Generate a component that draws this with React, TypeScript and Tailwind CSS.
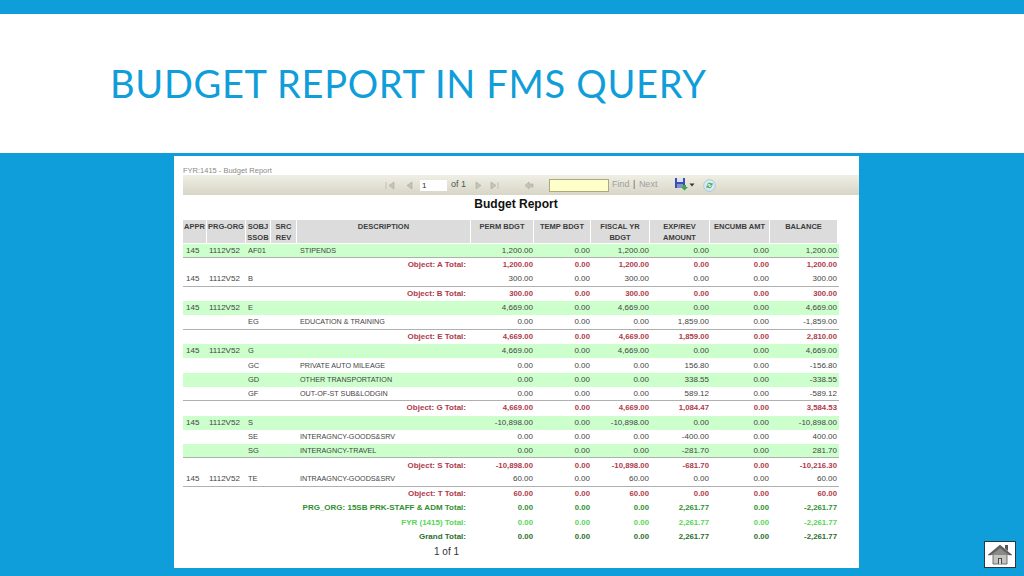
import React from "react";

const cols = "grid grid-cols-[24px_39px_25px_26px_174px_63px_57px_59px_60px_60px_68px]";
const num = "text-right pr-[1px]";

type R = { a?: string; p?: string; s?: string; d?: string; v: string[]; g?: boolean; line?: boolean };

const rows: R[] = [
  { a: "145", p: "1112V52", s: "AF01", d: "STIPENDS", v: ["1,200.00", "0.00", "1,200.00", "0.00", "0.00", "1,200.00"], g: true, line: true },
  { a: "T", d: "Object: A Total:", v: ["1,200.00", "0.00", "1,200.00", "0.00", "0.00", "1,200.00"] },
  { a: "145", p: "1112V52", s: "B", v: ["300.00", "0.00", "300.00", "0.00", "0.00", "300.00"], line: true },
  { a: "T", d: "Object: B Total:", v: ["300.00", "0.00", "300.00", "0.00", "0.00", "300.00"] },
  { a: "145", p: "1112V52", s: "E", v: ["4,669.00", "0.00", "4,669.00", "0.00", "0.00", "4,669.00"], g: true },
  { s: "EG", d: "EDUCATION & TRAINING", v: ["0.00", "0.00", "0.00", "1,859.00", "0.00", "-1,859.00"], line: true },
  { a: "T", d: "Object: E Total:", v: ["4,669.00", "0.00", "4,669.00", "1,859.00", "0.00", "2,810.00"] },
  { a: "145", p: "1112V52", s: "G", v: ["4,669.00", "0.00", "4,669.00", "0.00", "0.00", "4,669.00"], g: true },
  { s: "GC", d: "PRIVATE AUTO MILEAGE", v: ["0.00", "0.00", "0.00", "156.80", "0.00", "-156.80"] },
  { s: "GD", d: "OTHER TRANSPORTATION", v: ["0.00", "0.00", "0.00", "338.55", "0.00", "-338.55"], g: true },
  { s: "GF", d: "OUT-OF-ST SUB&LODGIN", v: ["0.00", "0.00", "0.00", "589.12", "0.00", "-589.12"], line: true },
  { a: "T", d: "Object: G Total:", v: ["4,669.00", "0.00", "4,669.00", "1,084.47", "0.00", "3,584.53"] },
  { a: "145", p: "1112V52", s: "S", v: ["-10,898.00", "0.00", "-10,898.00", "0.00", "0.00", "-10,898.00"], g: true },
  { s: "SE", d: "INTERAGNCY-GOODS&SRV", v: ["0.00", "0.00", "0.00", "-400.00", "0.00", "400.00"] },
  { s: "SG", d: "INTERAGNCY-TRAVEL", v: ["0.00", "0.00", "0.00", "-281.70", "0.00", "281.70"], g: true, line: true },
  { a: "T", d: "Object: S Total:", v: ["-10,898.00", "0.00", "-10,898.00", "-681.70", "0.00", "-10,216.30"] },
  { a: "145", p: "1112V52", s: "TE", d: "INTRAAGNCY-GOODS&SRV", v: ["60.00", "0.00", "60.00", "0.00", "0.00", "60.00"], line: true },
  { a: "T", d: "Object: T Total:", v: ["60.00", "0.00", "60.00", "0.00", "0.00", "60.00"] },
];

const totals = [
  { d: "PRG_ORG: 15SB PRK-STAFF & ADM Total:", c: "text-[#2f8f2f]", v: ["0.00", "0.00", "0.00", "2,261.77", "0.00", "-2,261.77"] },
  { d: "FYR (1415) Total:", c: "text-[#55d655]", v: ["0.00", "0.00", "0.00", "2,261.77", "0.00", "-2,261.77"] },
  { d: "Grand Total:", c: "text-[#2c6e2c]", v: ["0.00", "0.00", "0.00", "2,261.77", "0.00", "-2,261.77"] },
];

const heads: [string, string?][] = [
  ["APPR"], ["PRG-ORG"], ["SOBJ", "SSOB"], ["SRC", "REV"], ["DESCRIPTION"], ["PERM BDGT"], ["TEMP BDGT"],
  ["FISCAL YR", "BDGT"], ["EXP/REV", "AMOUNT"], ["ENCUMB AMT"], ["BALANCE"],
];

function Row({ r }: { r: R }) {
  const total = r.a === "T";
  if (total) {
    return (
      <div className={`${cols} h-[14.3px] items-center font-bold text-[#b03a4a] text-[7.8px] leading-[10px]`}>
        <div className="col-span-5 text-right pr-[5px] text-[8px]">{r.d}</div>
        {r.v.map((x, i) => <div key={i} className={num}>{x}</div>)}
      </div>
    );
  }
  return (
    <div className={`${cols} h-[14.3px] items-center text-[#444] leading-[10px] ${r.g ? "bg-[#ccffcc]" : ""} ${r.line ? "border-b-[1.5px] border-[#b0b0b0]" : ""}`}>
      <div className="pl-[3px]">{r.a}</div>
      <div className="pl-[2px]">{r.p}</div>
      <div className="pl-[2px] text-[7.5px]">{r.s}</div>
      <div></div>
      <div className="pl-[3px] text-[7.2px] whitespace-nowrap">{r.d}</div>
      {r.v.map((x, i) => <div key={i} className={num}>{x}</div>)}
    </div>
  );
}

function Arrow({ d }: { d: string }) {
  return (
    <svg width="11" height="9" viewBox="0 0 11 9">
      <path d={d} fill="#c4c4b8" stroke="#aaaaa0" strokeWidth="0.6" />
    </svg>
  );
}

export default function App() {
  return (
    <div className="w-[1024px] h-[576px] overflow-hidden bg-[#0f9ed9] flex flex-col font-['Liberation_Sans',Arial,sans-serif]">
      <div className="mt-[14px] h-[139px] bg-white shrink-0 flex items-center pl-[110px] pb-[2px]">
        <h1 className="text-[38px] leading-none text-[#0f9ed9] font-['Lato',sans-serif] tracking-[0.7px] whitespace-nowrap">BUDGET REPORT IN FMS QUERY</h1>
      </div>
      <div className="relative flex-1">
        <div className="ml-[174px] mt-[3px] w-[685px] h-[412px] bg-white pt-[10px] pl-[9px] flex flex-col">
          <div className="text-[7.5px] leading-[9px] text-[#8a8a8a] h-[9px]">FYR:1415 - Budget Report</div>
          <div className="h-[20px] bg-gradient-to-b from-[#f0efe5] to-[#d6d5c6] flex items-center text-[9px] text-[#777]">
            <div className="ml-[202px] flex items-center">
              <Arrow d="M1 1v7M9 1 4 4.500 9 8Z" />
              <div className="w-[8px]" />
              <Arrow d="M8 1 3 4.500 8 8Z" />
              <div className="ml-[5px] w-[27px] h-[11px] bg-white text-[#333] pl-[2px] text-[8px] leading-[11px]">1</div>
              <span className="ml-[4px] text-[#555]">of 1</span>
              <div className="w-[7px]" />
              <Arrow d="M3 1 8 4.500 3 8Z" />
              <div className="w-[5px]" />
              <Arrow d="M2 1 7 4.500 2 8ZM9 1v7" />
            </div>
            <div className="ml-[24px]"><Arrow d="M5 1v2h4v3H5v2L1 4.500Z" /></div>
            <div className="ml-[14px] w-[60px] h-[13px] bg-[#ffffcc] border border-[#b0a878]" />
            <span className="ml-[3px] text-[#a0a0a0]">Find</span>
            <span className="mx-[3.500px] text-[#666]">|</span>
            <span className="text-[#a0a0a0]">Next</span>
            <svg className="ml-[17px] -mt-[2px]" width="14" height="14" viewBox="0 0 14 14">
              <path d="M1 1h10v10H1Z" fill="#3b4fb0" />
              <path d="M3 1h6v4H3Z" fill="#dfe4f5" />
              <path d="M3 7h6v4H3Z" fill="#8592c9" />
              <path d="M9 8h3v2h2l-3.500 3.500L7 10h2Z" fill="#3fa34d" />
            </svg>
            <svg className="ml-[1px]" width="6" height="4" viewBox="0 0 6 4"><path d="M0.500 0.500h5L3 3.500Z" fill="#333" /></svg>
            <svg className="ml-[8px]" width="13" height="13" viewBox="0 0 13 13">
              <circle cx="6.500" cy="6.500" r="5.800" fill="#d8ecf5" stroke="#9cc0d6" strokeWidth="0.8" />
              <path d="M4 5.500a2.800 2.800 0 0 1 4.500-1L9.500 3.500v3h-3l1-1a1.800 1.800 0 0 0-2.800.5Z" fill="#55a860" />
              <path d="M9 7.500a2.800 2.800 0 0 1-4.500 1L3.500 9.500v-3h3l-1 1a1.800 1.800 0 0 0 2.800-.5Z" fill="#55a860" />
            </svg>
          </div>
          <div className="h-[18px] mb-[7px] flex items-center justify-center pr-[10px] text-[12px] font-bold text-[#111]">Budget Report</div>
          <div className={`${cols} h-[23px] mb-[1px] text-[7.5px] leading-[10.500px] font-bold text-[#3c3c3c] w-[655px] shrink-0`}>
            {heads.map((h, i) => (
              <div key={i} className="bg-[#dcdcdc] mr-[1px] text-center pt-[2px] whitespace-nowrap">
                <div>{h[0]}</div>
                {h[1] && <div>{h[1]}</div>}
              </div>
            ))}
          </div>
          <div className="w-[656px] text-[8px] leading-none">
            {rows.map((r, i) => <Row key={i} r={r} />)}
            {totals.map((t, i) => (
              <div key={i} className={`${cols} h-[14.3px] items-center font-bold text-[7.8px] leading-[10px] ${t.c}`}>
                <div className="col-span-5 text-right pr-[5px] text-[8px]">{t.d}</div>
                {t.v.map((x, j) => <div key={j} className={num}>{x}</div>)}
              </div>
            ))}
          </div>
          <div className="w-[656px] mt-[1px] pl-[251px] text-[10px] leading-[14px] text-[#333]">1 of 1</div>
        </div>
        <div className="absolute left-[984px] top-[388px] w-[32px] h-[27px] bg-white border border-[#1f3a4d] flex items-center justify-center">
          <svg width="26" height="23" viewBox="0 0 26 23">
            <path d="M6 11h14v10H6Z" fill="#c4c4be" stroke="#555" strokeWidth="0.8" />
            <path d="M11 21v-6h4v6Z" fill="#4a4a4a" />
            <path d="M12 16h2v5h-2Z" fill="#d8d8d8" />
            <path d="M13 5 4 12h18Z" fill="#8a8a8a" />
            <path d="M13 2 1 12h3l9-7 9 7h3Z" fill="#5f5f5f" stroke="#444" strokeWidth="0.4" />
            <path d="M18 2h3v6l-3-2.500Z" fill="#555" />
          </svg>
        </div>
      </div>
    </div>
  );
}
